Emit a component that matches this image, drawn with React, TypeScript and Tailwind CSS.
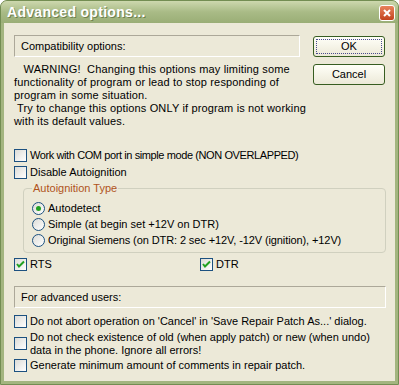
import React from 'react';

const font = { fontFamily: '"Liberation Sans", Arial, sans-serif' };

const CheckBox = ({ checked = false }: { checked?: boolean }) => (
  <span className="relative inline-block w-[13px] h-[13px] shrink-0 border border-[#1c5180] bg-linear-to-br from-[#dcdcd7] to-white">
    {checked && (
      <svg className="absolute left-[1px] top-[1px]" width="9" height="9" viewBox="0 0 9 9">
        <path d="M1 4 L3 6.5 L8 1.5" stroke="#21a121" strokeWidth="2" fill="none" />
      </svg>
    )}
  </span>
);

const Radio = ({ checked = false }: { checked?: boolean }) => (
  <span className="relative flex items-center justify-center w-[13px] h-[13px] shrink-0 rounded-full border border-[#1c5180] bg-linear-to-br from-[#dcdcd7] to-white">
    {checked && <span className="w-[5px] h-[5px] rounded-full bg-[#21a121]" />}
  </span>
);

const Panel = ({ children, w }: { children: React.ReactNode; w: string }) => (
  <div className={`${w} h-[22px] flex items-center pl-[6px] border border-t-[#aca899] border-l-[#aca899] border-b-white border-r-white`}>
    {children}
  </div>
);

const XpButton = ({ label, focused = false }: { label: string; focused?: boolean }) => (
  <button className="w-[72px] h-[21px] rounded-[3px] border border-[#375d21] bg-linear-to-b from-[#fffff8] to-[#ece9d8] p-[2px] text-[11px] text-black">
    <span className={`flex w-full h-full items-center justify-center ${focused ? 'border border-dotted border-[#4a4a90]' : ''}`}>
      {label}
    </span>
  </button>
);

const CheckRow = ({ label, checked, h = 'h-[17px]', track = '' }: { label: React.ReactNode; checked?: boolean; h?: string; track?: string }) => (
  <div className={`flex items-center ${h}`}>
    <CheckBox checked={checked} />
    <span className={`ml-[3px] leading-[13px] ${track}`}>{label}</span>
  </div>
);

export default function App() {
  return (
    <div className="w-[399px] h-[385px] bg-white" style={font}>
      <div className="w-[399px] h-[385px] flex flex-col rounded-t-[7px] bg-[#a3b57f] border border-[#738d52]">
        <div className="h-[22px] shrink-0 flex items-center justify-between rounded-t-[6px] bg-linear-to-b from-[#cdd8ae] via-[#a9bb86] to-[#9aae76] pl-[6px] pr-[3px]">
          <span className="text-white font-bold text-[14px] [text-shadow:1px_1px_0_#6e8050] tracking-[0.3px]">Advanced options...</span>
          <span className="w-[16px] h-[16px] mt-[1px] rounded-[3px] border border-white bg-linear-to-b from-[#e8835c] to-[#c2421c] flex items-center justify-center">
            <svg width="8" height="8" viewBox="0 0 8 8">
              <path d="M1 1 L7 7 M7 1 L1 7" stroke="white" strokeWidth="2" />
            </svg>
          </span>
        </div>
        <div className="flex-1 mx-[3px] mb-[3px] bg-[#ece9d8] text-[11px] text-black pl-[10px] pt-[12px]">
          <div className="flex">
            <div className="w-[286px]">
              <Panel w="w-[286px]">Compatibility options:</Panel>
              <div className="mt-[6px] leading-[13px] whitespace-pre tracking-[0.15px]">
                <div>{'   WARNING!  Changing this options may limiting some'}</div>
                <div>functionality of program or lead to stop responding of</div>
                <div>program in some situation.</div>
                <div>{' Try to change this options ONLY if program is not working'}</div>
                <div>with its default values.</div>
              </div>
            </div>
            <div className="ml-[13px] flex flex-col gap-[7px] mt-[1px]">
              <XpButton label="OK" focused />
              <XpButton label="Cancel" />
            </div>
          </div>

          <div className="mt-[19px]">
            <CheckRow label="Work with COM port in simple mode (NON OVERLAPPED)" track="tracking-[-0.4px]" />
            <CheckRow label="Disable Autoignition" />
          </div>

          <fieldset className="ml-[9px] mt-[1px] w-[363px] h-[71px] rounded-[4px] border border-[#d0d0bf] pl-[8px] pb-[4px]">
            <legend className="px-[1px] text-[#b0541c] leading-[13px]">Autoignition Type</legend>
            <div className="flex flex-col mt-[5px]">
              <div className="flex items-center h-[16px]">
                <Radio checked />
                <span className="ml-[3px]">Autodetect</span>
              </div>
              <div className="flex items-center h-[16px]">
                <Radio />
                <span className="ml-[3px]">Simple (at begin set +12V on DTR)</span>
              </div>
              <div className="flex items-center h-[17px]">
                <Radio />
                <span className="ml-[3px] tracking-[-0.1px]">Original Siemens (on DTR: 2 sec +12V, -12V (ignition), +12V)</span>
              </div>
            </div>
          </fieldset>

          <div className="flex mt-[3px] h-[17px] items-center">
            <div className="w-[186px]">
              <CheckRow label="RTS" checked />
            </div>
            <CheckRow label="DTR" checked />
          </div>

          <div className="mt-[13px]">
            <Panel w="w-[372px]">For advanced users:</Panel>
          </div>

          <div className="mt-[5px]">
            <CheckRow label="Do not abort operation on 'Cancel' in 'Save Repair Patch As...' dialog." />
            <CheckRow
              h="h-[27px]"
              label={
                <>
                  Do not check existence of old (when apply patch) or new (when undo)
                  <br />
                  data in the phone. Ignore all errors!
                </>
              }
            />
            <CheckRow label="Generate minimum amount of comments in repair patch." />
          </div>
        </div>
      </div>
    </div>
  );
}
